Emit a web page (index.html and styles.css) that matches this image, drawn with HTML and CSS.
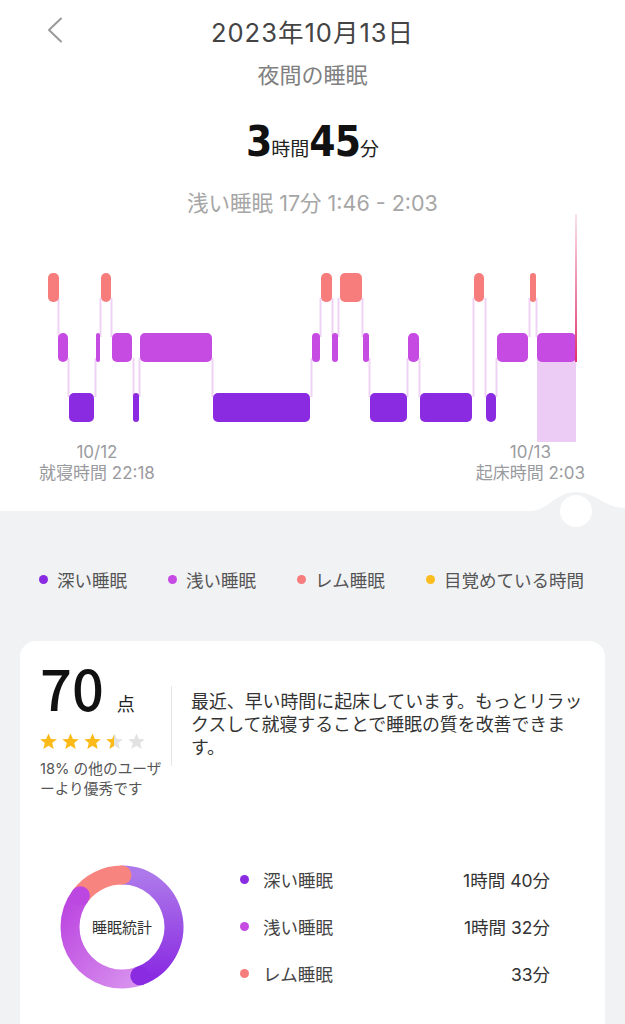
FILE: index.html
```html
<!DOCTYPE html>
<html lang="ja">
<head>
  <meta charset="UTF-8" />
  <meta name="viewport" content="width=device-width, initial-scale=1.0"/>
  <title>夜間の睡眠</title>
  <link rel="stylesheet" href="styles.css">
</head>
<body>
  <div class="sleep-top">
    <div class="nav">
      <a class="back" href="#">
        <svg width="16" height="26" viewBox="0 0 16 26"><polyline points="14,1.5 2,13 14,24.5" fill="none" stroke="#9a9a9a" stroke-width="2" stroke-linecap="round" stroke-linejoin="round"/></svg>
      </a>
      <h1 class="nav-title">2023年10月13日</h1>
      <span></span>
    </div>
    <div class="subtitle">夜間の睡眠</div>
    <div class="total"><b>3</b>時間<b>45</b>分</div>
    <div class="detail">浅い睡眠 17分 1:46 - 2:03</div>

    <svg class="stage-chart" viewBox="0 0 625 228">
      <defs>
        <linearGradient id="cursor" x1="0" y1="0" x2="0" y2="1">
          <stop offset="0" stop-color="#f9e3ea"/>
          <stop offset="1" stop-color="#e0306e"/>
        </linearGradient>
      </defs>
      <!-- connectors -->
      <g fill="#efd2f5">
        <rect x="57.5" y="84" width="2" height="39"/>
        <rect x="67.5" y="144" width="2" height="39"/>
        <rect x="94.5" y="144" width="2" height="39"/>
        <rect x="99.5" y="84" width="2" height="39"/>
        <rect x="110.5" y="84" width="2" height="39"/>
        <rect x="132.5" y="144" width="2" height="39"/>
        <rect x="138.5" y="144" width="2" height="39"/>
        <rect x="211.5" y="144" width="2" height="39"/>
        <rect x="310.5" y="144" width="2" height="39"/>
        <rect x="319.5" y="84" width="2" height="39"/>
        <rect x="331.5" y="84" width="2" height="39"/>
        <rect x="337.5" y="84" width="2" height="39"/>
        <rect x="361.5" y="84" width="2" height="39"/>
        <rect x="368.5" y="144" width="2" height="39"/>
        <rect x="406.5" y="144" width="2" height="39"/>
        <rect x="418.5" y="144" width="2" height="39"/>
        <rect x="472.5" y="84" width="2" height="99"/>
        <rect x="484.5" y="84" width="2" height="99"/>
        <rect x="495.5" y="144" width="2" height="39"/>
        <rect x="528.5" y="84" width="2" height="39"/>
        <rect x="535.5" y="84" width="2" height="39"/>
      </g>
      <!-- selected range -->
      <rect x="537" y="140" width="39" height="88" fill="#ecccf5"/>
      <!-- rem -->
      <g fill="#f77d7d">
        <rect x="48" y="59" width="11" height="29" rx="5"/>
        <rect x="101" y="59" width="10" height="29" rx="5"/>
        <rect x="321" y="59" width="11" height="29" rx="5"/>
        <rect x="340" y="59" width="22" height="29" rx="5"/>
        <rect x="474" y="59" width="10" height="29" rx="5"/>
        <rect x="530" y="59" width="6" height="29" rx="3"/>
      </g>
      <!-- light -->
      <g fill="#c64be3">
        <rect x="58" y="119" width="10" height="29" rx="5"/>
        <rect x="96" y="119" width="4" height="29" rx="2"/>
        <rect x="112" y="119" width="20" height="29" rx="5"/>
        <rect x="140" y="119" width="72" height="29" rx="5"/>
        <rect x="312" y="119" width="8" height="29" rx="4"/>
        <rect x="332" y="119" width="6" height="29" rx="3"/>
        <rect x="363" y="119" width="6" height="29" rx="3"/>
        <rect x="408" y="119" width="11" height="29" rx="5"/>
        <rect x="497" y="119" width="31" height="29" rx="5"/>
        <rect x="537" y="119" width="39" height="29" rx="5"/>
      </g>
      <!-- deep -->
      <g fill="#8a2be2">
        <rect x="69" y="179" width="25" height="29" rx="5"/>
        <rect x="133" y="179" width="6" height="29" rx="3"/>
        <rect x="213" y="179" width="97" height="29" rx="5"/>
        <rect x="370" y="179" width="37" height="29" rx="5"/>
        <rect x="420" y="179" width="52" height="29" rx="5"/>
        <rect x="486" y="179" width="10" height="29" rx="5"/>
      </g>
      <rect x="575" y="0" width="2" height="148" fill="url(#cursor)"/>
    </svg>

    <div class="time-labels">
      <div class="time-label">
        <div class="time-date">10/12</div>
        <div>就寝時間 22:18</div>
      </div>
      <div class="time-label">
        <div class="time-date">10/13</div>
        <div>起床時間 2:03</div>
      </div>
    </div>
  </div>

  <div class="sleep-bottom">
    <svg class="knob" width="95" height="40" viewBox="0 0 95 40">
      <path d="M0 22 C18 22 26 3 46 3 C66 3 74 19 95 19 L95 40 L0 40 Z" fill="#f1f2f4"/>
      <circle cx="46" cy="22" r="16" fill="#fff"/>
    </svg>

    <ul class="legend">
      <li><i class="dot deep"></i>深い睡眠</li>
      <li><i class="dot light"></i>浅い睡眠</li>
      <li><i class="dot rem"></i>レム睡眠</li>
      <li><i class="dot awake"></i>目覚めている時間</li>
    </ul>

    <div class="card">
      <div class="score-row">
        <div class="score">
          <div class="score-value"><span class="num">70</span><span class="unit">点</span></div>
          <div class="stars">
            <svg width="108" height="18" viewBox="0 0 108 18">
              <defs>
                <linearGradient id="half" x1="0" y1="0" x2="1" y2="0">
                  <stop offset="0.5" stop-color="#fbba18"/>
                  <stop offset="0.5" stop-color="#e2e2e2"/>
                </linearGradient>
                <polygon id="star" points="8.5,0.5 10.9,6 16.8,6.3 12.2,10.1 13.7,16 8.5,12.7 3.3,16 4.8,10.1 0.2,6.3 6.1,6"/>
              </defs>
              <use href="#star" x="0" y="1" fill="#fbba18"/>
              <use href="#star" x="22" y="1" fill="#fbba18"/>
              <use href="#star" x="44" y="1" fill="#fbba18"/>
              <use href="#star" x="66" y="1" fill="url(#half)"/>
              <use href="#star" x="88" y="1" fill="#e2e2e2"/>
            </svg>
          </div>
          <p class="rank">18% の他のユーザ<br>ーより優秀です</p>
        </div>
        <div class="divider"></div>
        <p class="advice">最近、早い時間に起床しています。もっとリラックスして就寝することで睡眠の質を改善できます。</p>
      </div>

      <div class="stats">
        <div class="donut">
          <svg width="130" height="130" viewBox="0 0 130 130">
            <defs>
              <linearGradient id="deepArc" x1="0" y1="0" x2="0" y2="1">
                <stop offset="0" stop-color="#ad78ea"/>
                <stop offset="1" stop-color="#8a2be2"/>
              </linearGradient>
              <linearGradient id="lightArc" x1="0" y1="0" x2="1" y2="1">
                <stop offset="0" stop-color="#bb45e0"/>
                <stop offset="1" stop-color="#d892ee"/>
              </linearGradient>
            </defs>
            <g fill="none" stroke-width="19">
              <path d="M65 13 A52 52 0 0 1 82.78 113.86" stroke="url(#deepArc)"/>
              <path d="M82.78 113.86 A52 52 0 0 1 23.47 33.71" stroke="url(#lightArc)"/>
              <path d="M23.47 33.71 A52 52 0 0 1 65 13" stroke="#f8847f"/>
            </g>
            <circle cx="82.78" cy="113.86" r="9.5" fill="#8a2be2"/>
            <circle cx="23.47" cy="33.71" r="9.5" fill="#bd48e1"/>
            <circle cx="65" cy="13" r="9.5" fill="#f8847f"/>
          </svg>
          <span class="donut-label">睡眠統計</span>
        </div>
        <ul class="stat-list">
          <li><i class="dot deep"></i><span class="stat-name">深い睡眠</span><span class="stat-value">1時間 40分</span></li>
          <li><i class="dot light"></i><span class="stat-name">浅い睡眠</span><span class="stat-value">1時間 32分</span></li>
          <li><i class="dot rem"></i><span class="stat-name">レム睡眠</span><span class="stat-value">33分</span></li>
        </ul>
      </div>
    </div>
  </div>
</body>
</html>
```

FILE: styles.css
```css
* { box-sizing: border-box; }
body {
  margin: 0;
  font-family: "Inter", "Noto Sans CJK JP", sans-serif;
  background: #f1f2f4;
  color: #333;
  overflow: hidden;
}
ul {
  list-style: none;
  margin: 0;
  padding: 0;
}
p { margin: 0; }

.sleep-top {
  background: #fff;
  padding-bottom: 26px;
}
.nav {
  display: grid;
  grid-template-columns: 1fr auto 1fr;
  align-items: center;
  height: 60px;
}
.back {
  display: flex;
  padding-left: 47px;
}
.nav-title {
  margin: 0;
  font-size: 25.5px;
  font-weight: 400;
  letter-spacing: 1px;
  color: #444;
}
.subtitle {
  height: 30px;
  line-height: 30px;
  text-align: center;
  font-size: 22px;
  color: #808080;
}
.total {
  margin-top: 22px;
  height: 60px;
  line-height: 60px;
  text-align: center;
  font-size: 19px;
  color: #222;
}
.total b {
  font-family: "DejaVu Sans Condensed", "Roboto", sans-serif;
  font-size: 42px;
  font-weight: bold;
  letter-spacing: -1px;
  color: #111;
}
.detail {
  margin-top: 20px;
  height: 22px;
  line-height: 22px;
  text-align: center;
  font-size: 21.5px;
  color: #a6a6a6;
}
.stage-chart {
  display: block;
  width: 625px;
  height: 228px;
}
.time-labels {
  display: flex;
  justify-content: space-between;
  padding: 0 40px 0 39px;
}
.time-label {
  text-align: center;
  font-size: 17px;
  line-height: 23px;
  color: #9a9b9f;
}
.time-date {
  line-height: 20px;
}

.sleep-bottom {
  position: relative;
  padding-top: 53px;
}
.knob {
  position: absolute;
  top: -22px;
  right: 0;
}
.legend {
  display: flex;
  padding-left: 39px;
  height: 30px;
  align-items: center;
}
.legend li {
  display: flex;
  align-items: center;
  gap: 9px;
  width: 129px;
  font-size: 17.5px;
  color: #555;
  white-space: nowrap;
}
.legend li:last-child { width: auto; }
.dot {
  display: inline-block;
  flex-shrink: 0;
  width: 9px;
  height: 9px;
  border-radius: 50%;
}
.dot.deep { background: #8a2be2; }
.dot.light { background: #c64be3; }
.dot.rem { background: #f77d7d; }
.dot.awake { background: #fbbc1d; }

.card {
  margin: 47px 20px 0;
  background: #fff;
  border-radius: 16px;
  padding: 18px 16px 40px 20px;
}
.score-row {
  display: flex;
  align-items: flex-start;
}
.score {
  width: 131px;
}
.score-value {
  display: flex;
  align-items: baseline;
  height: 56px;
}
.num {
  font-family: "Noto Sans CJK JP", sans-serif;
  font-size: 56px;
  line-height: 56px;
  font-weight: 500;
  color: #111;
}
.unit {
  margin-left: 13px;
  font-size: 18px;
  color: #222;
}
.stars {
  margin-top: 17px;
  height: 18px;
}
.stars svg { display: block; }
.rank {
  margin-top: 9px;
  font-size: 14.7px;
  line-height: 20px;
  color: #555;
}
.divider {
  width: 1px;
  height: 80px;
  margin-top: 27px;
  background: #e6e6e6;
}
.advice {
  flex: 1;
  margin: 31px 0 0 19px;
  font-size: 17.9px;
  line-height: 23px;
  color: #333;
}

.stats {
  display: flex;
  align-items: center;
  margin-top: 57px;
}
.donut {
  position: relative;
  width: 130px;
  height: 130px;
  margin-left: 17px;
}
.donut svg { display: block; }
.donut-label {
  position: absolute;
  inset: 0;
  display: flex;
  align-items: center;
  justify-content: center;
  font-size: 15px;
  color: #333;
}
.stat-list {
  width: 310px;
  margin-left: 53px;
}
.stat-list li {
  display: flex;
  align-items: center;
  height: 47px;
  font-size: 17.5px;
}
.stat-list .dot {
  margin-right: 14px;
}
.stat-name {
  flex: 1;
  color: #444;
}
.stat-value {
  color: #333;
}
```
